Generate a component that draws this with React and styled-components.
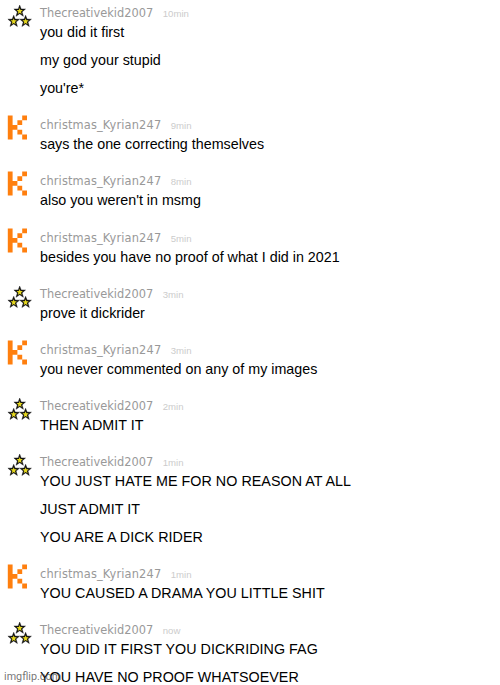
import React from "react";
import styled, { createGlobalStyle } from "styled-components";

const GlobalStyle = createGlobalStyle`
  body {
    margin: 0;
    background: #fff;
  }
`

const Page = styled.div`
  position: relative;
  box-sizing: border-box;
  width: 500px;
  height: 685px;
  padding-top: 3.3px;
  overflow: hidden;
`

const Group = styled.div`
  display: grid;
  grid-template-columns: 33px 1fr;
  padding-left: 7px;
  margin-bottom: 8.7px;
`

const Avatar = styled.svg`
  display: block;
  width: 25px;
  height: 26px;
`

const Header = styled.div`
  display: flex;
  align-items: center;
  height: 20px;
`

const Username = styled.span`
  font-family: Verdana, "DejaVu Sans", sans-serif;
  font-size: 11.4px;
  letter-spacing: ${props => props.$spacing};
  color: #999;
  white-space: nowrap;
`

const Time = styled.span`
  font-family: "Liberation Sans", Arial, sans-serif;
  font-size: 9.6px;
  color: #ccc;
  margin: 1px 0 0 9.5px;
`

const Message = styled.div`
  font-family: "Liberation Sans", Helvetica, sans-serif;
  font-size: 14.3px;
  letter-spacing: ${props => props.$caps ? "0.04px" : "0"};
  line-height: 18.4px;
  height: 19px;
  color: #000;
  white-space: nowrap;
  & + & {
    margin-top: 8.75px;
  }
`

const Text = styled.div`
  padding-bottom: 8.55px;
`

const Watermark = styled.div`
  position: absolute;
  left: 4px;
  bottom: 1px;
  font-family: Roboto, "Liberation Sans", sans-serif;
  font-size: 10.8px;
  line-height: 14px;
  color: rgba(70, 70, 70, 0.75);
`

const star = "M0-5.9 1.5-2.1 5.8-2 2.4 0.9 3.7 5.3 0 2.8-3.7 5.3-2.4 0.9-5.8-2-1.5-2.1Z"

function Stars() {
  return (
    <Avatar viewBox="0 0 25 26">
      {[[12.7, 8], [6.7, 18.2], [18.6, 18.2]].map(([x, y]) => (
        <g key={x} transform={`translate(${x} ${y})`}>
          <path d={star} fill="#111" stroke="#111" strokeWidth=".4" />
          <path d={star} fill="#e6d81e" transform="translate(0 .2) scale(.54)" />
        </g>
      ))}
    </Avatar>
  )
}

function PixelK() {
  return (
    <Avatar viewBox="0 0 25 26">
      <path
        fill="#ff7f0e"
        d="M.8 .4H5.6V10H10.4V14.8H5.6V24.4H.8ZM15.2 .4H20V5.2H15.2ZM10.4 5.2H15.2V10H10.4ZM10.4 14.8H15.2V19.6H10.4ZM15.2 19.6H20V24.4H15.2Z"
      />
    </Avatar>
  )
}

const kid = { name: "Thecreativekid2007", icon: Stars, spacing: "0px" }
const kyrian = { name: "christmas_Kyrian247", icon: PixelK, spacing: "0.14px" }

const groups = [
  { user: kid, time: "10min", lines: ["you did it first", "my god your stupid", "you're*"] },
  { user: kyrian, time: "9min", lines: ["says the one correcting themselves"] },
  { user: kyrian, time: "8min", lines: ["also you weren't in msmg"] },
  { user: kyrian, time: "5min", lines: ["besides you have no proof of what I did in 2021"] },
  { user: kid, time: "3min", lines: ["prove it dickrider"] },
  { user: kyrian, time: "3min", lines: ["you never commented on any of my images"] },
  { user: kid, time: "2min", lines: ["THEN ADMIT IT"] },
  { user: kid, time: "1min", lines: ["YOU JUST HATE ME FOR NO REASON AT ALL", "JUST ADMIT IT", "YOU ARE A DICK RIDER"] },
  { user: kyrian, time: "1min", lines: ["YOU CAUSED A DRAMA YOU LITTLE SHIT"] },
  { user: kid, time: "now", lines: ["YOU DID IT FIRST YOU DICKRIDING FAG", "YOU HAVE NO PROOF WHATSOEVER"] },
]

function ChatGroup({ user, time, lines }) {
  const Icon = user.icon;
  return (
    <Group>
      <Icon />
      <Text>
        <Header>
          <Username $spacing={user.spacing}>{user.name}</Username>
          <Time>{time}</Time>
        </Header>
        {lines.map(line => (
          <Message key={line} $caps={line === line.toUpperCase()}>{line}</Message>
        ))}
      </Text>
    </Group>
  )
}

function App() {
  return (
    <Page>
      <GlobalStyle />
      {groups.map((group, i) => (
        <ChatGroup key={i} {...group} />
      ))}
      <Watermark>imgflip.com</Watermark>
    </Page>
  )
}

export default App;
